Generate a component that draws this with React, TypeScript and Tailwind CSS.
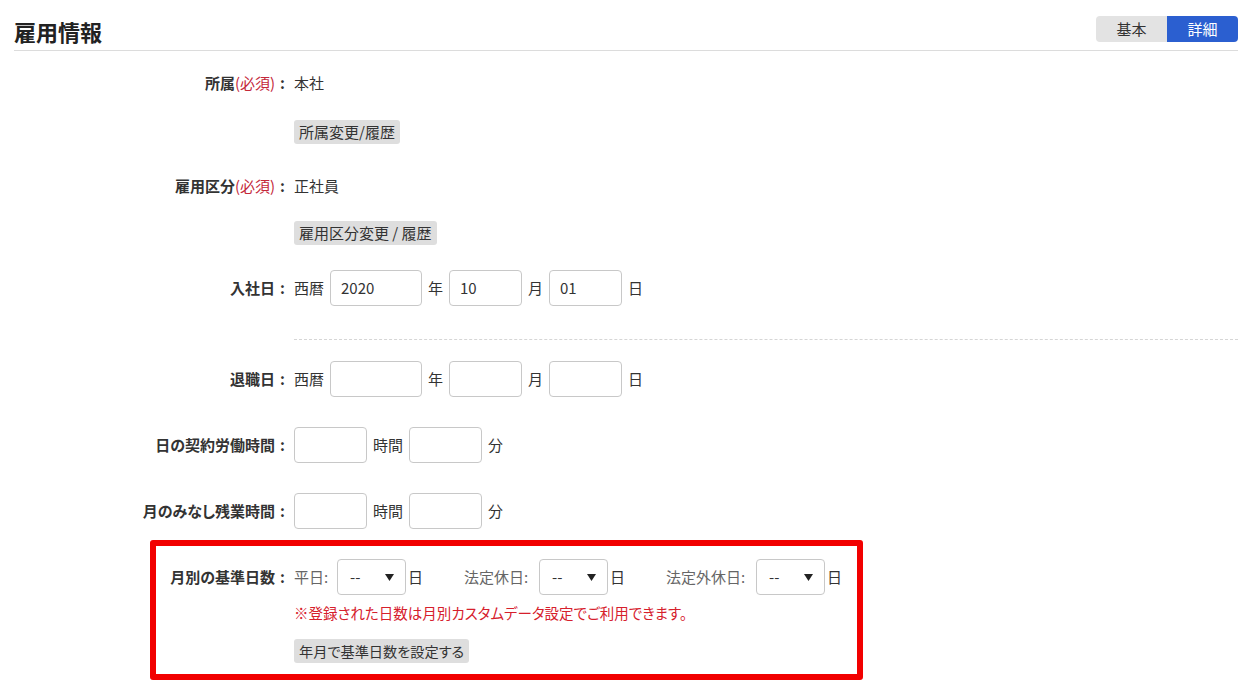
import React from "react";

const Btn = ({ children, className = "" }: { children: React.ReactNode; className?: string }) => (
  <span
    className={`inline-flex h-[24px] items-center rounded-[3px] bg-[#dedede] px-[5px] leading-[20px] text-[#333] ${className}`}
  >
    {children}
  </span>
);

const Input = ({ w, value }: { w: string; value?: string }) => (
  <div
    className={`${w} flex h-[36px] items-center rounded-[4px] border border-[#c8c8c8] bg-white pl-[10px] text-[15px] text-[#333]`}
  >
    {value}
  </div>
);

const Select = () => (
  <div className="flex h-[36px] w-[69px] shrink-0 items-center justify-between rounded-[4px] border border-[#c8c8c8] bg-white pl-[12px] pr-[11px] text-[15px] text-[#333]">
    <span>--</span>
    <svg width="9" height="7" viewBox="0 0 9 7">
      <path d="M0 0 L9 0 L4.5 7 Z" fill="#222" />
    </svg>
  </div>
);

const Colon = () => <span className="ml-[5px]">:</span>;

const Label = ({ children }: { children: React.ReactNode }) => (
  <div className="w-[280px] shrink-0 pr-[9px] text-right font-bold text-[#333]">
    {children}
    <Colon />
  </div>
);

export default function App() {
  return (
    <div
      className="min-h-[687px] w-[1256px] bg-white pl-[14px] pr-[18px] text-[15px] leading-[20px] text-[#333] [font-feature-settings:'palt']"
      style={{ fontFamily: '"Noto Sans CJK JP", "Noto Sans", sans-serif' }}
    >
      {/* header */}
      <div className="flex h-[51px] items-center justify-between border-b border-[#dcdcdc]">
        <h1 className="mt-[12px] text-[22px] font-bold leading-[28px] text-[#222]">雇用情報</h1>
        <div className="mt-[8px] flex h-[26px] overflow-hidden rounded-[4px] text-[15px]">
          <div className="flex w-[71px] items-center justify-center bg-[#e3e3e3] text-[#333]">基本</div>
          <div className="flex w-[71px] items-center justify-center bg-[#2b5fd0] text-white">詳細</div>
        </div>
      </div>

      {/* 所属 */}
      <div className="mt-[22px] flex">
        <Label>
          所属<span className="font-normal text-[#c4283a]">(必須)</span>
        </Label>
        <div>本社</div>
      </div>
      <div className="mt-[27px] flex">
        <div className="w-[280px] shrink-0" />
        <Btn className="text-[15px]">所属変更/履歴</Btn>
      </div>

      {/* 雇用区分 */}
      <div className="mt-[32px] flex">
        <Label>
          雇用区分<span className="font-normal text-[#c4283a]">(必須)</span>
        </Label>
        <div>正社員</div>
      </div>
      <div className="mt-[25px] flex">
        <div className="w-[280px] shrink-0" />
        <Btn className="text-[15px]">雇用区分変更 / 履歴</Btn>
      </div>

      {/* 入社日 */}
      <div className="mt-[25px] flex items-center">
        <Label>入社日</Label>
        <div className="flex items-center gap-[6px]">
          <span>西暦</span>
          <Input w="w-[92px]" value="2020" />
          <span>年</span>
          <Input w="w-[73px]" value="10" />
          <span>月</span>
          <Input w="w-[73px]" value="01" />
          <span>日</span>
        </div>
      </div>

      <div className="mt-[33px] ml-[280px] border-t border-dashed border-[#d6d6d6]" />

      {/* 退職日 */}
      <div className="mt-[21px] flex items-center">
        <Label>退職日</Label>
        <div className="flex items-center gap-[6px]">
          <span>西暦</span>
          <Input w="w-[92px]" />
          <span>年</span>
          <Input w="w-[73px]" />
          <span>月</span>
          <Input w="w-[73px]" />
          <span>日</span>
        </div>
      </div>

      {/* 日の契約労働時間 */}
      <div className="mt-[30px] flex items-center">
        <Label>日の契約労働時間</Label>
        <div className="flex items-center gap-[6px]">
          <Input w="w-[73px]" />
          <span>時間</span>
          <Input w="w-[73px]" />
          <span>分</span>
        </div>
      </div>

      {/* 月のみなし残業時間 */}
      <div className="mt-[30px] flex items-center">
        <Label>月のみなし残業時間</Label>
        <div className="flex items-center gap-[6px]">
          <Input w="w-[73px]" />
          <span>時間</span>
          <Input w="w-[73px]" />
          <span>分</span>
        </div>
      </div>

      {/* red box */}
      <div className="mt-[11px] ml-[136px] w-[713px] rounded-[3px] border-[6px] border-[#f20000] pt-[13px] pb-[11px]">
        <div className="flex items-center">
          <div className="w-[138px] shrink-0 pr-[9px] text-right font-bold text-[#333]">
            月別の基準日数
            <Colon />
          </div>
          <div className="flex items-center text-[#666]">
            <span className="w-[43px] shrink-0">平日:</span>
            <Select />
            <span className="ml-[2px] w-[15px] shrink-0 text-[#333]">日</span>
            <span className="ml-[41px] w-[75px] shrink-0">法定休日:</span>
            <Select />
            <span className="ml-[2px] w-[15px] shrink-0 text-[#333]">日</span>
            <span className="ml-[41px] w-[90px] shrink-0">法定外休日:</span>
            <Select />
            <span className="ml-[2px] w-[15px] shrink-0 text-[#333]">日</span>
          </div>
        </div>
        <div className="mt-[8px] pl-[138px] text-[14.5px] text-[#d6202c]">
          ※登録された日数は月別カスタムデータ設定でご利用できます。
        </div>
        <div className="mt-[16px] pl-[138px]">
          <Btn className="text-[14.2px]">年月で基準日数を設定する</Btn>
        </div>
      </div>
    </div>
  );
}
